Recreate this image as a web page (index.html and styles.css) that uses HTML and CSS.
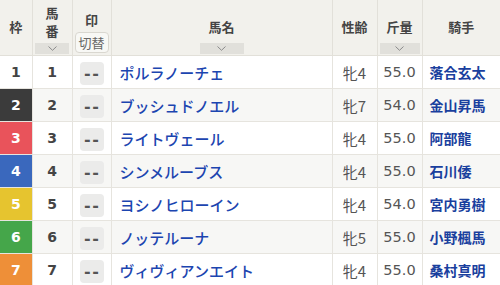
FILE: index.html
```html
<!DOCTYPE html>
<html lang="ja">
<head>
<meta charset="utf-8">
<link rel="stylesheet" href="styles.css">
</head>
<body>
<table class="race">
  <colgroup>
    <col class="c-waku"><col class="c-uma"><col class="c-mark"><col class="c-name"><col class="c-age"><col class="c-wt"><col class="c-jockey">
  </colgroup>
  <thead>
    <tr>
      <th><div class="hd"><span class="ht">枠</span></div></th>
      <th><div class="hd hd-stack"><span class="ht2">馬</span><span class="ht2">番</span><span class="sort sort-n"><svg width="9" height="5" viewBox="0 0 9 5"><path d="M0.5 0.5 L4.5 4.3 L8.5 0.5" fill="none" stroke="#8a8a8a" stroke-width="1"/></svg></span></div></th>
      <th><div class="hd hd-mark"><span class="ht3">印</span><span class="swap">切替</span></div></th>
      <th><div class="hd"><span class="ht">馬名</span><span class="sort sort-name"><svg width="9" height="5" viewBox="0 0 9 5"><path d="M0.5 0.5 L4.5 4.3 L8.5 0.5" fill="none" stroke="#8a8a8a" stroke-width="1"/></svg></span></div></th>
      <th><div class="hd"><span class="ht">性齢</span></div></th>
      <th><div class="hd"><span class="ht">斤量</span><span class="sort sort-wt"><svg width="9" height="5" viewBox="0 0 9 5"><path d="M0.5 0.5 L4.5 4.3 L8.5 0.5" fill="none" stroke="#8a8a8a" stroke-width="1"/></svg></span></div></th>
      <th><div class="hd"><span class="ht">騎手</span></div></th>
    </tr>
  </thead>
  <tbody>
    <tr><td class="waku w1">1</td><td class="num">1</td><td class="mk"><span class="btn">--</span></td><td class="name">ポルラノーチェ</td><td class="age">牝4</td><td class="wt">55.0</td><td class="jk">落合玄太</td></tr>
    <tr><td class="waku w2">2</td><td class="num">2</td><td class="mk"><span class="btn">--</span></td><td class="name">ブッシュドノエル</td><td class="age">牝7</td><td class="wt">54.0</td><td class="jk">金山昇馬</td></tr>
    <tr><td class="waku w3">3</td><td class="num">3</td><td class="mk"><span class="btn">--</span></td><td class="name">ライトヴェール</td><td class="age">牝4</td><td class="wt">55.0</td><td class="jk">阿部龍</td></tr>
    <tr><td class="waku w4">4</td><td class="num">4</td><td class="mk"><span class="btn">--</span></td><td class="name">シンメルーブス</td><td class="age">牝4</td><td class="wt">55.0</td><td class="jk">石川倭</td></tr>
    <tr><td class="waku w5">5</td><td class="num">5</td><td class="mk"><span class="btn">--</span></td><td class="name">ヨシノヒローイン</td><td class="age">牝4</td><td class="wt">54.0</td><td class="jk">宮内勇樹</td></tr>
    <tr><td class="waku w6">6</td><td class="num">6</td><td class="mk"><span class="btn">--</span></td><td class="name">ノッテルーナ</td><td class="age">牝5</td><td class="wt">55.0</td><td class="jk">小野楓馬</td></tr>
    <tr><td class="waku w7">7</td><td class="num">7</td><td class="mk"><span class="btn">--</span></td><td class="name">ヴィヴィアンエイト</td><td class="age">牝4</td><td class="wt">55.0</td><td class="jk">桑村真明</td></tr>
  </tbody>
</table>
</body>
</html>
```

FILE: styles.css
```css
html, body {
  margin: 0;
  padding: 0;
  background: #ffffff;
}
body {
  width: 500px;
  height: 285px;
  overflow: hidden;
  font-family: "Noto Sans CJK JP", "Noto Sans", sans-serif;
  color: #444;
}
.race {
  width: 500px;
  border-collapse: collapse;
  table-layout: fixed;
}
.c-waku { width: 32px; }
.c-uma { width: 40px; }
.c-mark { width: 39px; }
.c-name { width: 221px; }
.c-age { width: 45px; }
.c-wt { width: 45px; }
.c-jockey { width: 78px; }

thead th {
  background: #f2f1ec;
  height: 55px;
  padding: 0;
  border-left: 1px solid #e2e0d9;
  border-bottom: 1px solid #e2e0d9;
  vertical-align: top;
  font-weight: 700;
  font-size: 13px;
  color: #444;
}
thead th:first-child { border-left: none; }

.hd {
  height: 55px;
  display: flex;
  flex-direction: column;
  align-items: center;
  box-sizing: border-box;
  padding-top: 18px;
}
.ht {
  line-height: 18px;
  height: 18px;
}
.hd-stack { padding-top: 4px; }
.ht2 {
  display: block;
  line-height: 18px;
  height: 18px;
}
.hd-mark { padding-top: 11px; }
.ht3 {
  line-height: 18px;
  height: 18px;
}
.swap {
  margin-top: 3px;
  width: 34px;
  height: 21px;
  box-sizing: border-box;
  border: 1px solid #d9d7d0;
  border-radius: 4px;
  background: #f8f8f5;
  color: #666;
  font-weight: 400;
  font-size: 13px;
  line-height: 19px;
  text-align: center;
}
.sort {
  display: flex;
  align-items: center;
  justify-content: center;
  height: 11px;
  background: #e1e0db;
  margin-top: 7px;
}
.sort-n { width: 34px; margin-top: 3px; }
.sort-name { width: 44px; }
.sort-wt { width: 40px; }

tbody td {
  height: 32px;
  padding: 0;
  border-left: 1px solid #e6e4de;
  border-bottom: 1px solid #e6e4de;
  vertical-align: middle;
}
tbody td:first-child { border-left: none; }
tbody tr:nth-child(even) td { background: #f7f7f5; }

.waku, .num {
  text-align: center;
  font-weight: 700;
  font-size: 14px;
  font-family: "DejaVu Sans", "Noto Sans", sans-serif;
}
.num { color: #444; }
tbody tr td.waku { color: #fff; }
tbody tr td.w1 { background: #ffffff; color: #444; }
tbody tr td.w2 { background: #3b3b3b; }
tbody tr td.w3 { background: #e9535b; }
tbody tr td.w4 { background: #3a68bd; }
tbody tr td.w5 { background: #e6c42f; }
tbody tr td.w6 { background: #45a64a; }
tbody tr td.w7 { background: #ee8f38; }

.mk { text-align: center; }
.btn {
  display: inline-flex;
  align-items: center;
  justify-content: center;
  width: 24px;
  height: 23px;
  border-radius: 4px;
  background: #ebebea;
  color: #555;
  font-weight: 700;
  font-size: 16px;
  font-family: "DejaVu Sans", sans-serif;
  letter-spacing: 1.5px;
  text-indent: 1.5px;
  vertical-align: middle;
}
.name {
  padding-left: 8px !important;
  color: #1c45b0;
  font-size: 15px;
  font-weight: 500;
  white-space: nowrap;
  overflow: hidden;
}
.age, .wt {
  text-align: center;
  font-size: 15px;
  color: #555;
  font-family: "DejaVu Sans", "Noto Sans CJK JP", sans-serif;
}
.age { font-family: "Noto Sans CJK JP", sans-serif; }
.wt { font-size: 14.5px; }
.jk {
  padding-left: 7px !important;
  color: #1a3f9e;
  font-size: 14px;
  font-weight: 700;
  white-space: nowrap;
}
```
